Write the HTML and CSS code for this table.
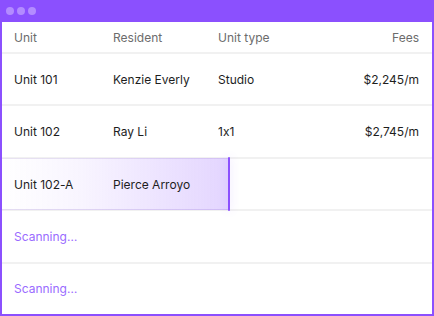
FILE: index.html
```html
<!DOCTYPE html>
<html>
<head>
<meta charset="utf-8">
<link rel="stylesheet" href="styles.css">
</head>
<body>
<div class="window">
  <div class="titlebar">
    <span class="dot"></span><span class="dot"></span><span class="dot"></span>
  </div>
  <div class="table">
    <div class="row head">
      <div>Unit</div><div>Resident</div><div>Unit type</div><div class="fees">Fees</div>
    </div>
    <div class="row">
      <div>Unit 101</div><div>Kenzie Everly</div><div>Studio</div><div class="fees">$2,245/m</div>
    </div>
    <div class="row">
      <div>Unit 102</div><div>Ray Li</div><div>1x1</div><div class="fees">$2,745/m</div>
    </div>
    <div class="row scan">
      <div class="highlight"><span class="bar"></span></div>
      <div class="cell">Unit 102-A</div><div class="cell">Pierce Arroyo</div><div></div><div></div>
    </div>
    <div class="row pending">
      <div>Scanning…</div>
    </div>
    <div class="row pending last">
      <div>Scanning…</div>
    </div>
  </div>
</div>
</body>
</html>
```
FILE: styles.css
```css
* { box-sizing: border-box; }
html, body { margin: 0; padding: 0; }
body {
  width: 434px;
  height: 316px;
  font-family: Inter, "Noto Sans", sans-serif;
  font-size: 12px;
  font-feature-settings: "calt" 0;
  overflow: hidden;
}
.window {
  width: 434px;
  height: 316px;
  background: #8b50fe;
  padding: 0 2px 2px;
  display: flex;
  flex-direction: column;
}
.titlebar {
  height: 22px;
  flex: none;
  display: flex;
  align-items: center;
  gap: 3px;
  padding: 0 0 1px 4px;
}
.dot {
  width: 8px;
  height: 8px;
  border-radius: 50%;
  background: #b38cff;
}
.table {
  flex: 1;
  background: #fff;
  display: flex;
  flex-direction: column;
}
.row {
  display: grid;
  grid-template-columns: 99px 105px 1fr auto;
  align-items: center;
  padding: 0 13px 0 12px;
  flex: 1;
  border-bottom: 2px solid #f1f1f1;
  color: #1e1e1e;
  position: relative;
}
.row.head {
  flex: none;
  height: 32px;
  color: #6c6c6c;
}
.row.last { border-bottom: none; }
.fees { text-align: right; }
.pending { color: #9a6bff; }
.scan .cell { position: relative; }
.highlight {
  position: absolute;
  left: 0;
  top: -1px;
  bottom: -1px;
  width: 226px;
  background: linear-gradient(90deg, rgba(139, 80, 254, 0.0) 0%, rgba(139, 80, 254, 0.06) 35%, rgba(139, 80, 254, 0.24) 100%);
  border-top: 1px solid rgba(139, 80, 254, 0.08);
  border-bottom: 1px solid rgba(139, 80, 254, 0.12);
}
.bar {
  position: absolute;
  right: -2px;
  top: -2px;
  bottom: -2px;
  width: 2px;
  border-radius: 1px;
  background: #8b50fe;
  box-shadow: 0 0 8px rgba(139, 80, 254, 0.25);
}
```
